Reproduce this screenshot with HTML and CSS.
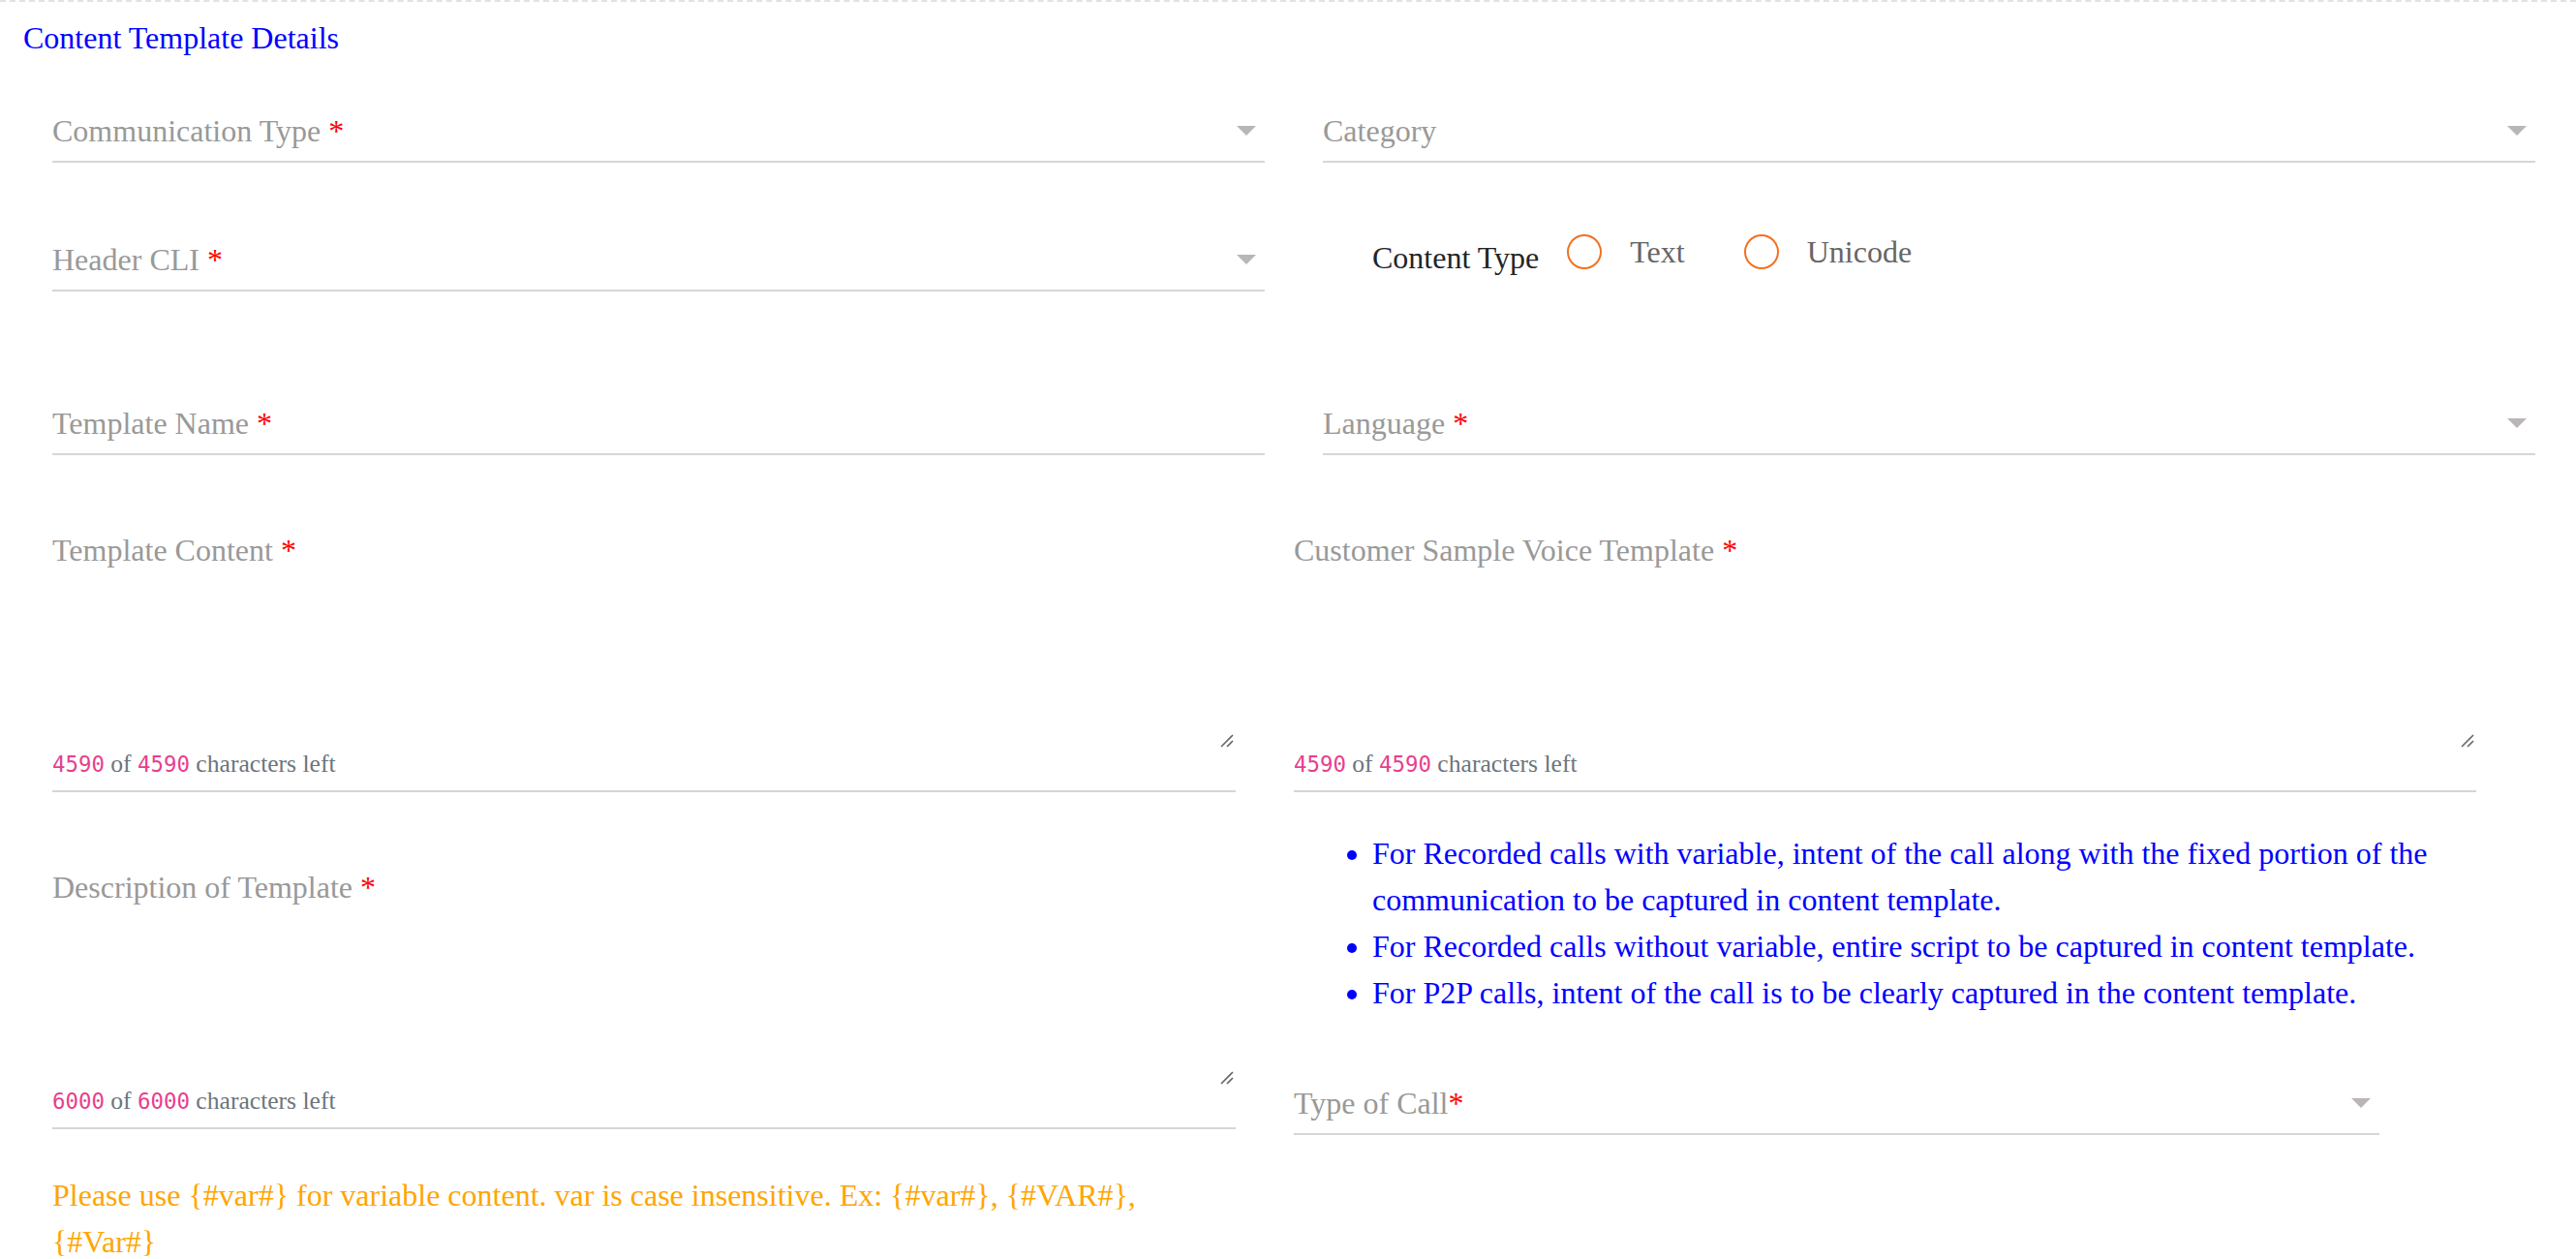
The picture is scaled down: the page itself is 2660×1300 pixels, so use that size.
FILE: index.html
```html
<!DOCTYPE html>
<html lang="en">
<head>
<meta charset="utf-8">
<title>Content Template Details</title>
<link rel="stylesheet" href="styles.css">
</head>
<body>
<div class="page">
  <div class="title">Content Template Details</div>

  <div class="row r1">
    <div class="col">
      <div class="select"><span class="lbl">Communication Type <span class="req">*</span></span><span class="caret"></span></div>
    </div>
    <div class="col">
      <div class="select"><span class="lbl">Category</span><span class="caret"></span></div>
    </div>
  </div>

  <div class="row r2">
    <div class="col">
      <div class="select"><span class="lbl">Header CLI <span class="req">*</span></span><span class="caret"></span></div>
    </div>
    <div class="col">
      <div class="ctype">
        <span class="ctype-lbl">Content Type</span>
        <label class="radio"><span class="radio-dot"></span><span class="radio-txt">Text</span></label>
        <label class="radio radio-2"><span class="radio-dot"></span><span class="radio-txt">Unicode</span></label>
      </div>
    </div>
  </div>

  <div class="row r3">
    <div class="col">
      <div class="select"><span class="lbl">Template Name <span class="req">*</span></span></div>
    </div>
    <div class="col">
      <div class="select"><span class="lbl">Language <span class="req">*</span></span><span class="caret"></span></div>
    </div>
  </div>

  <div class="row r4">
    <div class="col">
      <div class="ta ta-l">
        <div class="ta-box">
          <span class="lbl">Template Content <span class="req">*</span></span>
          <svg class="ta-handle" viewBox="0 0 14 14"><path d="M1 13 L13 1 M7 13 L13 7" stroke="#666" stroke-width="1.6" fill="none"/></svg>
        </div>
        <div class="counter"><code>4590</code> of <code>4590</code> characters left</div>
      </div>
    </div>
    <div class="col col-flush">
      <div class="ta ta-r">
        <div class="ta-box">
          <span class="lbl">Customer Sample Voice Template <span class="req">*</span></span>
          <svg class="ta-handle" viewBox="0 0 14 14"><path d="M1 13 L13 1 M7 13 L13 7" stroke="#666" stroke-width="1.6" fill="none"/></svg>
        </div>
        <div class="counter"><code>4590</code> of <code>4590</code> characters left</div>
      </div>
    </div>
  </div>

  <div class="row r5">
    <div class="col col-desc">
      <div class="ta ta-l">
        <div class="ta-box">
          <span class="lbl">Description of Template <span class="req">*</span></span>
          <svg class="ta-handle" viewBox="0 0 14 14"><path d="M1 13 L13 1 M7 13 L13 7" stroke="#666" stroke-width="1.6" fill="none"/></svg>
        </div>
        <div class="counter"><code>6000</code> of <code>6000</code> characters left</div>
      </div>
      <p class="note">Please use {#var#} for variable content. var is case insensitive. Ex: {#var#}, {#VAR#}, {#Var#}</p>
    </div>
    <div class="col col-flush">
      <ul class="hints">
        <li>For Recorded calls with variable, intent of the call along with the fixed portion of the communication to be captured in content template.</li>
        <li>For Recorded calls without variable, entire script to be captured in content template.</li>
        <li>For P2P calls, intent of the call is to be clearly captured in the content template.</li>
      </ul>
      <div class="select toc"><span class="lbl">Type of Call<span class="req">*</span></span><span class="caret"></span></div>
    </div>
  </div>
</div>
</body>
</html>
```

FILE: styles.css
```css
html, body {
  margin: 0;
  padding: 0;
  background: #ffffff;
}

body {
  font-family: "Liberation Serif", "Times New Roman", serif;
  font-size: 32px;
}

.page {
  border-top: 2px dashed #e2e2e2;
  padding-left: 24px;
}

.title {
  color: #0000ff;
  line-height: 36px;
  padding-top: 19px;
}

.row {
  display: grid;
  grid-template-columns: 1312px 1312px;
  align-items: start;
}

.col {
  padding: 0 30px;
}

.col-flush {
  padding: 0;
}

.r1 { margin-top: 60px; }
.r2 { margin-top: 82px; }
.r3 { margin-top: 118px; }
.r4 { margin-top: 80px; }
.r5 { margin-top: 39px; }

.select {
  display: flex;
  align-items: center;
  justify-content: space-between;
  border-bottom: 2px solid #d6d6d6;
  padding-bottom: 13px;
}

.lbl {
  color: #999999;
  line-height: 36px;
}

.req {
  color: #ff0000;
}

.caret {
  width: 0;
  height: 0;
  border-left: 10px solid transparent;
  border-right: 10px solid transparent;
  border-top: 10px solid #bab6b6;
  margin-right: 9px;
}

/* content type radios */
.ctype {
  display: flex;
  align-items: flex-start;
  padding-left: 51px;
  margin-top: -2px;
}

.ctype-lbl {
  color: #212529;
  line-height: 36px;
}

.radio {
  display: flex;
  align-items: center;
  height: 36px;
  margin-top: -6px;
  margin-left: 29px;
}

.radio-2 {
  margin-left: 61px;
}

.radio-dot {
  box-sizing: border-box;
  width: 36px;
  height: 36px;
  border: 2px solid #f37021;
  border-radius: 50%;
}

.radio-txt {
  color: #666666;
  line-height: 36px;
  margin-left: 29px;
}

/* textareas */
.ta {
  border-bottom: 2px solid #d6d6d6;
  padding-bottom: 13px;
}

.ta-l { width: 1222px; }
.ta-r { width: 1221px; }

.ta-box {
  height: 223px;
  display: flex;
  flex-direction: column;
  justify-content: space-between;
}

.ta-box .lbl {
  align-self: flex-start;
}

.ta-handle {
  display: block;
  align-self: flex-end;
  width: 14px;
  height: 14px;
  margin: 0 2px 1px 0;
}

.counter {
  font-size: 25.6px;
  line-height: 28px;
  padding-top: 2px;
  color: #6c757d;
}

.counter code {
  font-family: "DejaVu Sans Mono", "Liberation Mono", monospace;
  font-size: 0.875em;
  line-height: 1;
  color: #e83e8c;
}

.col-desc {
  padding-top: 41px;
}

.note {
  margin: 44px 0 0;
  width: 1222px;
  color: #ffa500;
  line-height: 48px;
}

.hints {
  margin: 0;
  padding-left: 81px;
  color: #0000ff;
  line-height: 48px;
}

.toc {
  width: 1121px;
  margin-top: 72px;
}
```
